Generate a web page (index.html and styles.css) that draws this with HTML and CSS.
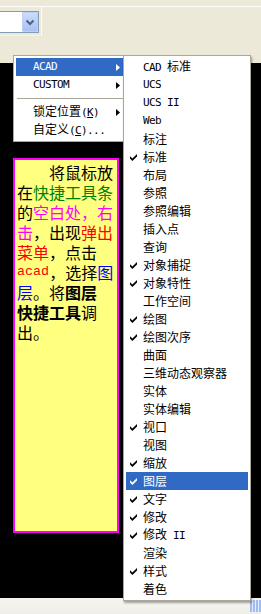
FILE: index.html
```html
<!DOCTYPE html>
<html lang="zh-CN">
<head>
<meta charset="utf-8">
<title>ACAD 快捷菜单</title>
<link rel="stylesheet" href="styles.css">
</head>
<body>
<svg class="defs" aria-hidden="true">
  <symbol id="chk" viewBox="0 0 7 7"><path d="M0 2.2 L2.4 4.6 L7 0 L7 2.4 L2.4 7 L0 4.6 Z"/></symbol>
  <symbol id="arr" viewBox="0 0 4 7"><path d="M0 0 L4 3.5 L0 7 Z"/></symbol>
</svg>
<div class="screen">
  <header class="topbar">
    <div class="band">
      <div class="toolbar">
        <div class="combo">
          <div class="combo-field"></div>
          <div class="combo-btn">
            <svg width="16" height="20" viewBox="0 0 16 20"><path d="M4.5 8.5 L8 12 L11.5 8.5" fill="none" stroke="#4d6185" stroke-width="2"/></svg>
          </div>
        </div>
      </div>
    </div>
  </header>

  <main class="workspace">
    <div class="note">
      <p class="note-text">
        <span class="ln first"><span class="seg">将鼠标放</span></span>
        <span class="ln"><span class="seg">在</span><span class="seg c-green">快捷工具条</span></span>
        <span class="ln"><span class="seg">的</span><span class="seg c-mag">空白处，右</span></span>
        <span class="ln"><span class="seg c-mag">击</span><span class="seg">，出现</span><span class="seg c-red">弹出</span></span>
        <span class="ln"><span class="seg c-red">菜单</span><span class="seg">，点击</span></span>
        <span class="ln"><span class="seg c-red latin">acad</span><span class="seg">，选择</span><span class="seg c-blue">图</span></span>
        <span class="ln"><span class="seg c-blue">层</span><span class="seg">。将</span><b class="seg">图层</b></span>
        <span class="ln"><b class="seg">快捷工具</b><span class="seg">调</span></span>
        <span class="ln"><span class="seg">出。</span></span>
      </p>
    </div>
  </main>

  <footer class="statusbar"><div class="grip"></div></footer>

  <nav class="menu menu-main">
    <div class="item active"><span class="mark"></span><span class="label en">ACAD</span><svg class="arrow"><use href="#arr"/></svg></div>
    <div class="item"><span class="mark"></span><span class="label en">CUSTOM</span><svg class="arrow"><use href="#arr"/></svg></div>
    <div class="sep"></div>
    <div class="item"><span class="mark"></span><span class="label">锁定位置<span class="en">(<u>K</u>)</span></span><svg class="arrow"><use href="#arr"/></svg></div>
    <div class="item"><span class="mark"></span><span class="label">自定义<span class="en">(<u>C</u>)...</span></span></div>
  </nav>

  <nav class="menu menu-sub">
    <div class="item"><span class="mark"></span><span class="label"><span class="en">CAD </span>标准</span></div>
    <div class="item"><span class="mark"></span><span class="label en">UCS</span></div>
    <div class="item"><span class="mark"></span><span class="label en">UCS II</span></div>
    <div class="item"><span class="mark"></span><span class="label en">Web</span></div>
    <div class="item"><span class="mark"></span><span class="label">标注</span></div>
    <div class="item"><span class="mark"><svg class="check"><use href="#chk"/></svg></span><span class="label">标准</span></div>
    <div class="item"><span class="mark"></span><span class="label">布局</span></div>
    <div class="item"><span class="mark"></span><span class="label">参照</span></div>
    <div class="item"><span class="mark"></span><span class="label">参照编辑</span></div>
    <div class="item"><span class="mark"></span><span class="label">插入点</span></div>
    <div class="item"><span class="mark"></span><span class="label">查询</span></div>
    <div class="item"><span class="mark"><svg class="check"><use href="#chk"/></svg></span><span class="label">对象捕捉</span></div>
    <div class="item"><span class="mark"><svg class="check"><use href="#chk"/></svg></span><span class="label">对象特性</span></div>
    <div class="item"><span class="mark"></span><span class="label">工作空间</span></div>
    <div class="item"><span class="mark"><svg class="check"><use href="#chk"/></svg></span><span class="label">绘图</span></div>
    <div class="item"><span class="mark"><svg class="check"><use href="#chk"/></svg></span><span class="label">绘图次序</span></div>
    <div class="item"><span class="mark"></span><span class="label">曲面</span></div>
    <div class="item"><span class="mark"></span><span class="label">三维动态观察器</span></div>
    <div class="item"><span class="mark"></span><span class="label">实体</span></div>
    <div class="item"><span class="mark"></span><span class="label">实体编辑</span></div>
    <div class="item"><span class="mark"><svg class="check"><use href="#chk"/></svg></span><span class="label">视口</span></div>
    <div class="item"><span class="mark"></span><span class="label">视图</span></div>
    <div class="item"><span class="mark"><svg class="check"><use href="#chk"/></svg></span><span class="label">缩放</span></div>
    <div class="item active"><span class="mark"><svg class="check"><use href="#chk"/></svg></span><span class="label">图层</span></div>
    <div class="item"><span class="mark"><svg class="check"><use href="#chk"/></svg></span><span class="label">文字</span></div>
    <div class="item"><span class="mark"><svg class="check"><use href="#chk"/></svg></span><span class="label">修改</span></div>
    <div class="item"><span class="mark"><svg class="check"><use href="#chk"/></svg></span><span class="label">修改<span class="en"> II</span></span></div>
    <div class="item"><span class="mark"></span><span class="label">渲染</span></div>
    <div class="item"><span class="mark"><svg class="check"><use href="#chk"/></svg></span><span class="label">样式</span></div>
    <div class="item"><span class="mark"></span><span class="label">着色</span></div>
  </nav>
</div>
</body>
</html>
```
FILE: styles.css
```css
* { box-sizing: border-box; margin: 0; padding: 0; }

html, body {
  width: 261px;
  height: 614px;
  overflow: hidden;
}

body {
  background: #ece9d8;
  font-family: "Noto Sans CJK SC", sans-serif;
  color: #000;
}

.defs {
  position: absolute;
  width: 0;
  height: 0;
  overflow: hidden;
}

.screen {
  position: relative;
  width: 261px;
  height: 614px;
  display: flex;
  flex-direction: column;
}

/* ---------- top toolbar area ---------- */
.topbar {
  flex: none;
  height: 63px;
  padding-top: 6px;
  background: #ece9d8;
}

.band {
  border-top: 1px solid #fdfdfb;
}

.toolbar {
  width: 42px;
  height: 29px;
  padding-top: 4px;
  border-right: 1px solid #fbfaf5;
  border-bottom: 1px solid #f6f4ec;
}

.combo {
  display: flex;
  width: 39px;
  height: 22px;
  background: #fff;
  border: 1px solid #7f9db9;
  border-left: none;
}

.combo-field {
  flex: 1;
}

.combo-btn {
  width: 16px;
  height: 20px;
  background: linear-gradient(#cddcfc, #b6cbf6 60%, #a9c0f2);
  border: 1px solid #bccff5;
  border-radius: 1px;
}

.combo-btn svg {
  display: block;
  margin: -1px 0 0 -1px;
}

/* ---------- black drawing area ---------- */
.workspace {
  flex: none;
  height: 535px;
  background: #000;
  padding: 95px 0 0 13px;
}

.note {
  width: 106px;
  height: 375px;
  border: 2px solid #ff00ff;
  background: #ffff80;
  padding: 2px 4px 0 2px;
}

.note-text {
  display: flex;
  flex-direction: column;
  font-size: 16px;
}

.ln {
  display: flex;
  height: 20px;
  white-space: nowrap;
}

.ln.first {
  padding-left: 32px;
}

.seg {
  display: block;
  height: 20px;
  line-height: 20px;
  overflow: visible;
}

b.seg { font-weight: 700; }

.c-green { color: #008000; }
.c-mag { color: #ff00ff; }
.c-red { color: #ff0000; }
.c-blue { color: #0000ff; }

.latin {
  font-family: "Liberation Mono", monospace;
  font-size: 13.4px;
}

/* ---------- bottom strip ---------- */
.statusbar {
  flex: none;
  height: 16px;
  background: linear-gradient(#f6f5f0, #efeee7);
  display: flex;
  justify-content: flex-end;
  align-items: flex-start;
}

.grip {
  width: 11px;
  height: 12px;
  margin-top: 2px;
  background:
    repeating-linear-gradient(90deg, #9fbbf0 0 2px, #e6eefd 2px 3px);
}

/* ---------- context menus ---------- */
.menu {
  position: absolute;
  top: 55px;
  background: #fff;
  border: 1px solid #aca899;
  padding: 2px;
  font-size: 12px;
}

.menu-main {
  left: 13px;
  width: 116px;
  z-index: 1;
}

.menu-sub {
  left: 123px;
  width: 128px;
  z-index: 2;
  box-shadow: 1px 2px 2px rgba(0, 0, 0, 0.35);
}

.item {
  display: flex;
  align-items: center;
  height: 18px;
  line-height: 18px;
  white-space: nowrap;
}

.item.active {
  background: #316ac5;
  color: #fff;
}

.mark {
  flex: none;
  width: 17px;
  height: 18px;
  display: flex;
  align-items: center;
  padding-left: 4px;
}

.check {
  width: 7px;
  height: 7px;
  fill: currentColor;
}

.label {
  flex: 1;
}

.en {
  font-family: "DejaVu Sans Mono", monospace;
  font-size: 11px;
  letter-spacing: -0.6px;
}

.label u {
  text-decoration: underline;
  text-underline-offset: 1px;
}

.arrow {
  flex: none;
  width: 4px;
  height: 7px;
  margin-right: 6px;
  fill: currentColor;
}

.sep {
  height: 9px;
  padding-top: 4px;
  margin: 0 1px;
}

.sep::before {
  content: "";
  display: block;
  height: 1px;
  background: #aca899;
}
```
